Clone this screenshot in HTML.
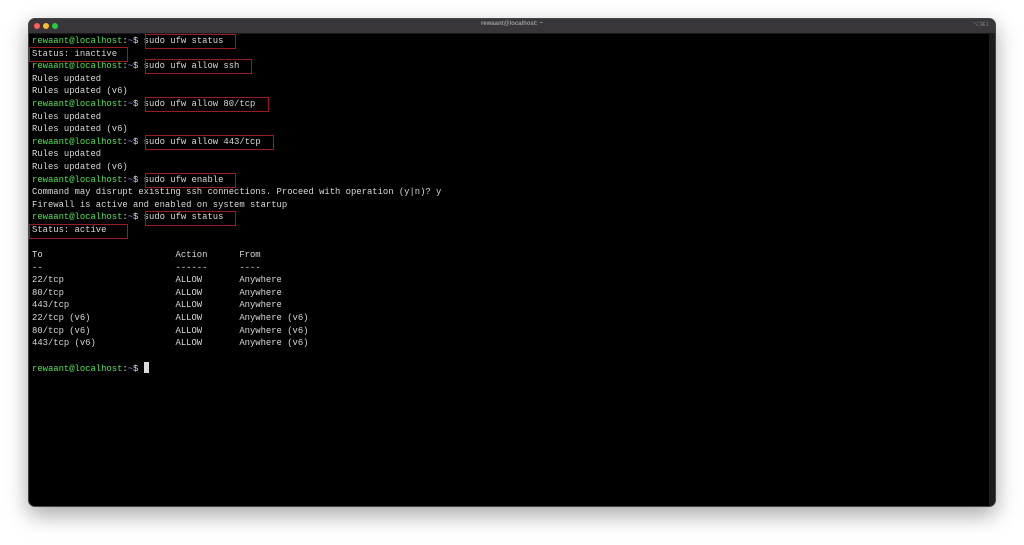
<!DOCTYPE html>
<html><head><meta charset="utf-8"><style>
body{margin:0;width:1024px;height:545px;background:#fff;overflow:hidden;position:relative;font-family:"Liberation Mono",monospace}
.win{position:absolute;left:28px;top:18px;width:968px;height:489px;background:#000;border-radius:7px;box-shadow:0 8px 22px rgba(0,0,0,.35);overflow:hidden;border:1px solid #444;box-sizing:border-box}
.tb{position:absolute;left:0;top:0;right:0;height:14px;background:#38363a;border-bottom:1px solid #1a1a1a}
.tb .t{position:absolute;left:0;right:0;top:2px;text-align:center;color:#9a999c;font:bold 6px "Liberation Sans",sans-serif}
.tb .k{position:absolute;right:6px;top:2px;color:#777;font:6px "Liberation Sans",sans-serif}
.d{position:absolute;top:4px;width:6px;height:6px;border-radius:50%}
.sb{position:absolute;right:0;top:14px;bottom:0;width:6px;background:#1c1c1c}
.l{position:absolute;left:3px;font-size:8.87px;line-height:12.6px;color:#d8d8d8;white-space:pre}
.g{color:#4fe44f}.b{color:#7c9ff0}
.bx{position:absolute;border:1px solid #9a1d1d;box-sizing:border-box;height:15px}
.cur{display:inline-block;width:5px;height:11px;background:#ddd;vertical-align:-2px}
</style></head><body>
<div class="win">
<div class="tb"><div class="d" style="left:5px;background:#fe5f57"></div><div class="d" style="left:14px;background:#febc2e"></div><div class="d" style="left:23px;background:#28c840"></div><div class="t">rewaant@localhost: ~</div><div class="k">⌥⌘1</div></div>
<div class="sb"></div>
<div class="l" style="top:16px"><span class="g">rewaant@localhost</span>:<span class="b">~</span>$ sudo ufw status
Status: inactive
<span class="g">rewaant@localhost</span>:<span class="b">~</span>$ sudo ufw allow ssh
Rules updated
Rules updated (v6)
<span class="g">rewaant@localhost</span>:<span class="b">~</span>$ sudo ufw allow 80/tcp
Rules updated
Rules updated (v6)
<span class="g">rewaant@localhost</span>:<span class="b">~</span>$ sudo ufw allow 443/tcp
Rules updated
Rules updated (v6)
<span class="g">rewaant@localhost</span>:<span class="b">~</span>$ sudo ufw enable
Command may disrupt existing ssh connections. Proceed with operation (y|n)? y
Firewall is active and enabled on system startup
<span class="g">rewaant@localhost</span>:<span class="b">~</span>$ sudo ufw status
Status: active

To                         Action      From
--                         ------      ----
22/tcp                     ALLOW       Anywhere
80/tcp                     ALLOW       Anywhere
443/tcp                    ALLOW       Anywhere
22/tcp (v6)                ALLOW       Anywhere (v6)
80/tcp (v6)                ALLOW       Anywhere (v6)
443/tcp (v6)               ALLOW       Anywhere (v6)

<span class="g">rewaant@localhost</span>:<span class="b">~</span>$ <span class="cur"></span></div>
<div class="bx" style="left:116px;top:15px;width:91px"></div>
<div class="bx" style="left:0px;top:28px;width:99px"></div>
<div class="bx" style="left:116px;top:40px;width:107px"></div>
<div class="bx" style="left:116px;top:78px;width:124px"></div>
<div class="bx" style="left:116px;top:116px;width:129px"></div>
<div class="bx" style="left:116px;top:154px;width:91px"></div>
<div class="bx" style="left:116px;top:192px;width:91px"></div>
<div class="bx" style="left:0px;top:205px;width:99px"></div>
</div>
</body></html>
